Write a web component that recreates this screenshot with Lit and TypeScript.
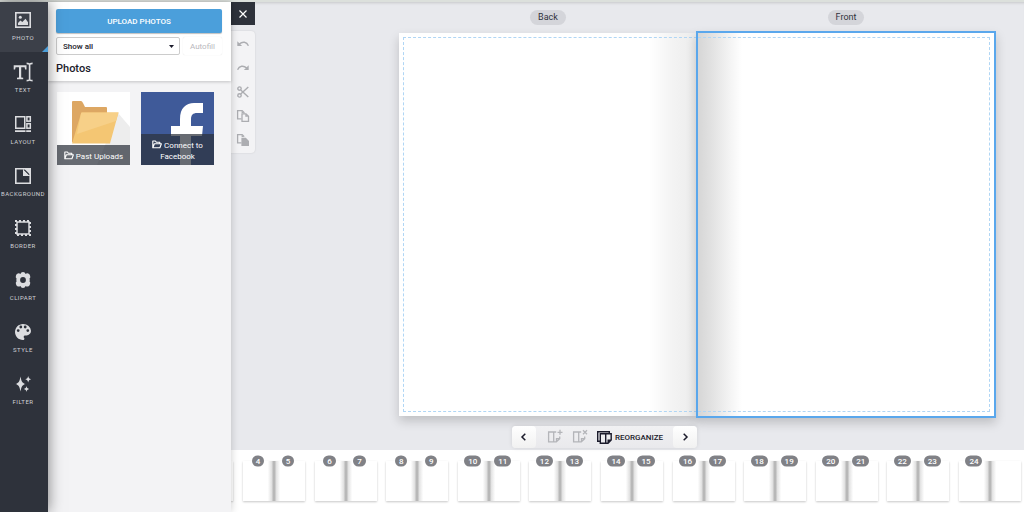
import { LitElement, html, svg, css, TemplateResult } from "lit";
import { customElement, property } from "lit/decorators.js";

const navIcons: Record<string, TemplateResult> = {
  photo: svg`<rect x="0.8" y="0.8" width="14.4" height="14.4" fill="none" stroke="currentColor" stroke-width="1.6"/>
    <circle cx="5.3" cy="5.3" r="1.5"/><path d="M3 13v-2l2.400-2.400 1.900 1.500 3.200-3.400L13 10.300V13z"/>`,
  text: svg`<path d="M-1.300 1.200h12.800v4.200h-1.400L9.600 3.200H6.200v10.200l2 .4v1.400H2v-1.400l2-.4V3.200H.6L.1 5.400h-1.400z"/>
    <path d="M11.600-.600c1.700 0 2.800.4 3 1.100.200-.7 1.300-1.100 3-1.100M14.600 0v16M11.600 16.600c1.700 0 2.800-.4 3-1.100.200.700 1.300 1.100 3 1.100" fill="none" stroke="currentColor" stroke-width="1.600"/>`,
  layout: svg`<g fill="none" stroke="currentColor" stroke-width="1.500"><rect x="0.750" y="0.750" width="9" height="11.500"/>
    <rect x="11.900" y="0.750" width="3.400" height="4.400"/><rect x="11.900" y="7.700" width="3.400" height="4.500"/></g>
    <path d="M0 14.300h10.500V16H0zM11.200 14.300H16V16h-4.800z"/>`,
  background: svg`<path d="M0.800 0.800h14.400v14.400H0.800z" fill="none" stroke="currentColor" stroke-width="1.600"/>
    <path d="M8 .7v7.200h7.300z"/><path d="M9.200.7h6v6z"/><path d="M9 2l5 5" stroke="#2e323b" stroke-width=".7"/>`,
  border: svg`<rect x="2" y="2" width="12" height="12" fill="none" stroke="currentColor" stroke-width="1.500"/>
    <rect x="1" y="1" width="14" height="14" fill="none" stroke="currentColor" stroke-width="2" stroke-dasharray="2 2" stroke-dashoffset="1"/>`,
  clipart: svg`<path fill-rule="evenodd" d="M8 0a2.700 2.700 0 0 1 2.600 2A2.700 2.700 0 0 1 15 3.500a2.800 2.800 0 0 1-.5 3.300 2.600 2.600 0 0 1 0 2.500 2.800 2.800 0 0 1 .4 3.300A2.700 2.700 0 0 1 10.600 14a2.700 2.700 0 0 1-5.200 0A2.700 2.700 0 0 1 1.100 12.500a2.800 2.800 0 0 1 .5-3.300 2.600 2.600 0 0 1 0-2.500A2.800 2.800 0 0 1 1 3.500 2.700 2.700 0 0 1 5.400 2 2.700 2.700 0 0 1 8 0zm0 5.100a2.900 2.900 0 1 0 0 5.800 2.900 2.900 0 0 0 0-5.800z"/>`,
  style: svg`<path fill-rule="evenodd" d="M8 0C3.600 0 0 3.600 0 8s3.600 8 8 8c.8 0 1.400-.6 1.400-1.300 0-.4-.1-.7-.4-.9-.2-.3-.3-.6-.3-.9 0-.8.6-1.400 1.300-1.400h1.600c2.400 0 4.400-2 4.400-4.400C16 3.200 12.400 0 8 0zM3.200 8a1.400 1.400 0 1 1 0-2.800 1.400 1.400 0 0 1 0 2.800zm2.600-3.600a1.400 1.400 0 1 1 0-2.800 1.400 1.400 0 0 1 0 2.800zm4.400 0a1.400 1.400 0 1 1 0-2.800 1.400 1.400 0 0 1 0 2.800zM12.800 8a1.400 1.400 0 1 1 0-2.800 1.400 1.400 0 0 1 0 2.800z"/>`,
  filter: svg`<path d="M5.500.500C6.300 5 7.300 7.200 10.500 8 7.300 8.800 6.300 11 5.500 15.500 4.700 11 3.700 8.800.500 8 3.700 7.200 4.700 5 5.500.500zM13.200 0c.5 2 1 2.700 2.900 3.200-1.900.5-2.400 1.200-2.900 3.200-.5-2-1-2.700-2.900-3.200 1.900-.5 2.400-1.200 2.900-3.200zM11.500 10c.4 1.900.9 2.500 2.700 3-1.800.5-2.300 1.100-2.700 3-.4-1.900-.9-2.500-2.700-3 1.800-.5 2.300-1.100 2.700-3z"/>`,
};

const navItems = ["photo", "text", "layout", "background", "border", "clipart", "style", "filter"];

const editTools: { name: string; icon: TemplateResult }[] = [
  {
    name: "Undo",
    icon: svg`<path d="M.3 3.200v4.800h4.800z"/><path d="M2.300 6C5.500 3.200 9.800 3.700 11.400 7.700" fill="none" stroke="currentColor" stroke-width="1.400"/>`,
  },
  {
    name: "Redo",
    icon: svg`<path d="M11.700 3.200v4.800H6.900z"/><path d="M9.700 6C6.500 3.200 2.200 3.700.6 7.700" fill="none" stroke="currentColor" stroke-width="1.400"/>`,
  },
  {
    name: "Cut",
    icon: svg`<g fill="none" stroke="currentColor" stroke-width="1.400"><circle cx="2.500" cy="2.600" r="1.700"/><circle cx="2.500" cy="9.400" r="1.700"/><path d="M3.700 3.900l7.600 7.200M3.700 8.100l7.600-7.200"/></g>`,
  },
  {
    name: "Copy",
    icon: svg`<g fill="none" stroke="currentColor" stroke-width="1.300"><path d="M4.500 8.800H.6V.600h4.600L7 2.400v1"/><path d="M5 3.800h4l2.500 2.400v5.200H5z"/></g><path d="M4.600.600V3h2.600zM8.300 3.800v2.900h3z"/>`,
  },
  {
    name: "Paste",
    icon: svg`<path d="M4.500 8.800H.6V.600h4.600L7.200 2.600" fill="none" stroke="currentColor" stroke-width="1.300"/><path d="M4.600.600V3h2.600zM4.400 3.800h4.400L12 6.900v5.100H4.400z"/>`,
  },
];

const pageWithFold = svg`<path d="M6.700 12.800H1.600V3h5.100v10.400M6.700 3h2.500M6.700 12.800h2.600l3.400-3.200V7.500M9.500 12.800V9.700h3.200" fill="none" stroke="currentColor" stroke-width="1.300"/>`;

const openFolder = html`<svg class="folder" viewBox="0 0 10 9" width="10" height="9" aria-hidden="true">
  <path d="M.8 7.800V1h2.600l1 1.300h3.400v1.500M.8 7.800l1.600-4h7L7.900 7.800z" fill="none" stroke="currentColor" stroke-width="1.100" stroke-linejoin="round"/>
</svg>`;

@customElement("page-thumb")
class PageThumb extends LitElement {
  @property({ type: Number }) left = 0;
  @property({ type: Number }) right = 0;

  static styles = css`
    :host { display: block; flex: none; width: 62px; }
    .sheet {
      box-sizing: border-box;
      height: 40px;
      box-shadow: 0 1px 2px rgba(0, 0, 0, 0.22);
      background: linear-gradient(90deg, #fff 40%, #e2e2e2 46%, #b8b8b8 49%, #b8b8b8 51%, #e4e4e4 54%, #fff 60%);
    }
    .numbers {
      display: grid;
      grid-template-columns: 1fr 1fr;
      justify-items: center;
      padding-right: 2px;
      transform: translateY(-50%);
    }
    .num {
      padding: 0 4px;
      border-radius: 6px;
      background: #808186;
      color: #fff;
      font-size: 8px;
      font-weight: 500;
      line-height: 11px;
    }
  `;

  render() {
    return html`<div class="sheet"><div class="numbers">
      <span class="num">${this.left}</span>
      ${this.right ? html`<span class="num">${this.right}</span>` : null}
    </div></div>`;
  }
}

@customElement("app-root")
class AppRoot extends LitElement {
  static styles = css`
    :host {
      display: grid;
      grid-template-columns: 48px 183px minmax(0, 1fr);
      box-sizing: border-box;
      min-height: 100vh;
      border-top: 2px solid #dce0dc;
      font-family: Roboto, "Liberation Sans", sans-serif;
      color: #1b1b2b;
      background: #e8e9ed;
    }
    button, select { font-family: inherit; color: inherit; margin: 0; padding: 0; border: 0; background: none; }
    svg { display: block; fill: currentColor; overflow: visible; }

    .nav { position: relative; z-index: 3; background: #2e323b; box-shadow: 0 0 14px rgba(0, 0, 0, 0.5); }
    .nav-item {
      position: relative;
      display: flex;
      flex-direction: column;
      align-items: center;
      gap: 6px;
      width: 100%;
      height: 52px;
      padding-top: 12px;
      color: #dcdde0;
    }
    .nav-item svg { margin-right: 2px; }
    .nav-item.active { height: 50px; padding-top: 10px; background: #3c4049; }
    .nav-item.active::after {
      content: "";
      position: absolute;
      right: 0;
      bottom: 0;
      border: 3px solid transparent;
      border-right-color: #4b9fdb;
      border-bottom-color: #4b9fdb;
    }
    .nav-label { margin-right: 2px; font-size: 6px; line-height: 7px; letter-spacing: 0.08em; text-transform: uppercase; color: #cfd1d5; }

    .panel { position: relative; z-index: 2; background: #f3f3f5; box-shadow: 0 0 8px rgba(0, 0, 0, 0.2); }
    .panel-head { padding: 7px 9px 6px 8px; background: #fff; box-shadow: 0 1px 3px rgba(0, 0, 0, 0.2); }
    .upload {
      display: block;
      width: 100%;
      height: 24px;
      border-radius: 2px;
      background: #4b9fdb;
      box-shadow: 0 1px 1px rgba(0, 0, 0, 0.25);
      color: #fff;
      font-size: 8px;
      font-weight: 500;
    }
    .filter-row { display: flex; gap: 3px; margin-top: 4px; }
    .filter-row label { flex: 1; }
    .select {
      display: block;
      width: 100%;
      height: 18px;
      padding: 0 6px;
      appearance: none;
      border: 1px solid #ccc;
      border-radius: 2px;
      background: url('data:image/svg+xml,<svg xmlns="http://www.w3.org/2000/svg" width="5" height="3"><path d="M0 0h5L2.500 3z" fill="%231b1b2b"/></svg>') no-repeat right 5px center #fff;
      font-size: 8px;
      font-weight: 500;
    }
    .autofill { width: 39px; border-radius: 2px; box-shadow: 0 0 1px rgba(0, 0, 0, 0.15); color: #b8b8bd; font-size: 8px; }
    h1 { margin: 7px 0 0; font-size: 11px; line-height: 13px; font-weight: 500; }
    .sources { display: flex; gap: 11px; padding: 11px 9px; }
    .source { display: grid; width: 73px; height: 73px; background: #fff; color: #fff; }
    .source > * { grid-area: 1 / 1; }
    .source.facebook { background: #3f5a99; }
    .caption {
      align-self: end;
      z-index: 1;
      padding: 6px 4px 3px;
      background: rgba(45, 50, 60, 0.72);
      font-size: 8px;
      line-height: 11px;
      text-align: center;
    }
    .folder { display: inline-block; vertical-align: -1px; }

    .editor { display: flex; flex-direction: column; min-width: 0; }
    .stage { flex: 1; display: grid; grid-template-columns: 24px minmax(0, 1fr); column-gap: 144px; padding-right: 29px; box-shadow: inset 0 3px 3px -2px rgba(0, 0, 0, 0.15); }
    .close { display: grid; place-items: center; width: 24px; height: 23px; background: #2e323b; color: #fff; }
    .tools {
      display: flex;
      flex-direction: column;
      margin-top: 6px;
      border-radius: 0 4px 4px 0;
      background: #f3f3f5;
      box-shadow: 0 0 2px rgba(0, 0, 0, 0.12);
      color: #acadb1;
    }
    .tools button { display: grid; place-items: center; height: 24px; }
    .tools button:first-child { height: 25px; padding-top: 1px; }
    .tools button:last-child { height: 25px; padding-bottom: 1px; }

    .spread { display: grid; grid-template-columns: 1fr 1fr; grid-template-rows: auto 1fr; row-gap: 8px; padding-top: 8px; }
    .side { justify-self: center; padding: 0 8px; border-radius: 8px; background: #d4d5da; font-size: 9px; line-height: 15px; color: #30313a; }
    .page { display: grid; min-height: 375px; padding: 4px; background: #fff; box-shadow: 0 5px 10px rgba(0, 0, 0, 0.18); }
    .guide { border: 1px dashed #b0d6f5; }
    .page.back { padding-right: 0; background: linear-gradient(270deg, #ececec, #f3f3f3 24px, #fff 48px); }
    .page.front {
      margin: -2px -1px -2px -1px;
      padding-left: 0;
      border: 2px solid #5aa7ec;
      background: linear-gradient(90deg, #d6d6d6, #e2e2e2 14px, #f2f2f2 30px, #fff 44px);
    }
    .front .guide { border-left: 0; }

    .pager {
      display: flex;
      align-self: center;
      position: relative;
      z-index: 1;
      height: 22px;
      margin: 10px 46px 2px 0;
      border-radius: 4px;
      background: linear-gradient(#f1f1f3, #e9e9ec);
      box-shadow: 0 0 4px rgba(0, 0, 0, 0.1);
    }
    .pager button { display: flex; align-items: center; justify-content: center; }
    .pager .step { width: 24px; background: linear-gradient(#fff, #f1f1f1); border-radius: 4px; }
    .pager .actions { display: flex; gap: 9px; padding: 0 10px 0 11px; }
    .pager .muted { width: 16px; color: #b4b5b9; }
    .pager .reorganize { gap: 3px; font-size: 8px; font-weight: 500; }

    .strip { display: flex; height: 62px; background: #fff; }
    .previous { width: 2px; height: 40px; margin-top: 11px; box-shadow: 0 1px 2px rgba(0, 0, 0, 0.25); }
    .thumbs { flex: 1; display: flex; justify-content: space-between; padding: 11px 3px 0 10px; }
  `;

  render() {
    return html`
      <nav class="nav">
        ${navItems.map(
          (name) => html`<button class="nav-item ${name === "photo" ? "active" : ""}">
            <svg viewBox="0 0 16 16" width="16" height="16" aria-hidden="true">${navIcons[name]}</svg>
            <span class="nav-label">${name}</span>
          </button>`
        )}
      </nav>

      <aside class="panel">
        <div class="panel-head">
          <button class="upload">UPLOAD PHOTOS</button>
          <div class="filter-row">
            <label><select class="select" aria-label="Show photos"><option>Show all</option></select></label>
            <button class="autofill" disabled>Autofill</button>
          </div>
          <h1>Photos</h1>
        </div>
        <div class="sources">
          <button class="source">
            <svg viewBox="0 0 73 73" width="73" height="73" aria-hidden="true">
              <path d="M61 21l12 14v38H40z" fill="#ededed"/>
              <path d="M15 10q0-1 1-1h8q1 0 2 2l2 4h21q1 0 1 1v10L18 51l-3-1z" fill="#dda763"/>
              <path d="M24 21.500q0-1 1-1h36.500L53 51.500H15z" fill="#f4c673"/>
              <path d="M24 21.500q0-1 1-1h36.500L59 29 20 42z" fill="#f7d088"/>
            </svg>
            <span class="caption">${openFolder} Past Uploads</span>
          </button>
          <button class="source facebook">
            <svg viewBox="0 0 73 73" width="73" height="73" aria-hidden="true">
              <path d="M39 73V44h-9V34h9v-7c0-11 6-16 14-16h9v10h-6c-4 0-6 2-6 6v7h12l-1 10H50v29z" fill="#fff"/>
            </svg>
            <span class="caption">${openFolder} Connect to Facebook</span>
          </button>
        </div>
      </aside>

      <main class="editor">
        <div class="stage">
          <div>
            <button class="close" aria-label="Close panel">
              <svg viewBox="0 0 8 8" width="8" height="8"><path d="M.5.5l7 7M7.500.5l-7 7" stroke="currentColor" stroke-width="1.200"/></svg>
            </button>
            <div class="tools">
              ${editTools.map(
                (tool) => html`<button aria-label=${tool.name}>
                  <svg viewBox="0 0 12 12" width="12" height="12">${tool.icon}</svg>
                </button>`
              )}
            </div>
          </div>
          <div class="spread">
            <span class="side">Back</span>
            <span class="side">Front</span>
            <div class="page back"><div class="guide"></div></div>
            <div class="page front"><div class="guide"></div></div>
          </div>
        </div>

        <div class="pager">
          <button class="step" aria-label="Previous pages">
            <svg viewBox="0 0 5 8" width="5" height="8"><path d="M4.300.7L1 4l3.300 3.300" fill="none" stroke="currentColor" stroke-width="1.500"/></svg>
          </button>
          <div class="actions">
            <button class="muted" aria-label="Add pages">
              <svg viewBox="0 0 16 16" width="16" height="16">${pageWithFold}<path d="M13 .8v5M10.500 3.300h5" stroke="currentColor" stroke-width="1.300"/></svg>
            </button>
            <button class="muted" aria-label="Remove pages">
              <svg viewBox="0 0 16 16" width="16" height="16">${pageWithFold}<path d="M11 1.300l4 4M15 1.300l-4 4" stroke="currentColor" stroke-width="1.300"/></svg>
            </button>
            <button class="reorganize">
              <svg viewBox="0 0 15 13" width="15" height="13" aria-hidden="true">
                <g fill="none" stroke="currentColor" stroke-width="1.400"><path d="M3 10.300H.700V.700h11.600V3"/><path d="M8.700 12.300H3.300V2.800h10.900v6.200l-3.200 3.300H8.700zM8.700 2.800v9.500M11.200 12V9.200h3"/></g>
              </svg>
              REORGANIZE
            </button>
          </div>
          <button class="step" aria-label="Next pages">
            <svg viewBox="0 0 5 8" width="5" height="8"><path d="M.7.7L4 4 .7 7.300" fill="none" stroke="currentColor" stroke-width="1.500"/></svg>
          </button>
        </div>

        <div class="strip">
          <div class="previous"></div>
          <div class="thumbs">
            ${Array.from({ length: 11 }, (_, i) => 4 + i * 2).map(
              (n) => html`<page-thumb .left=${n} .right=${n < 24 ? n + 1 : 0}></page-thumb>`
            )}
          </div>
        </div>
      </main>
    `;
  }
}
